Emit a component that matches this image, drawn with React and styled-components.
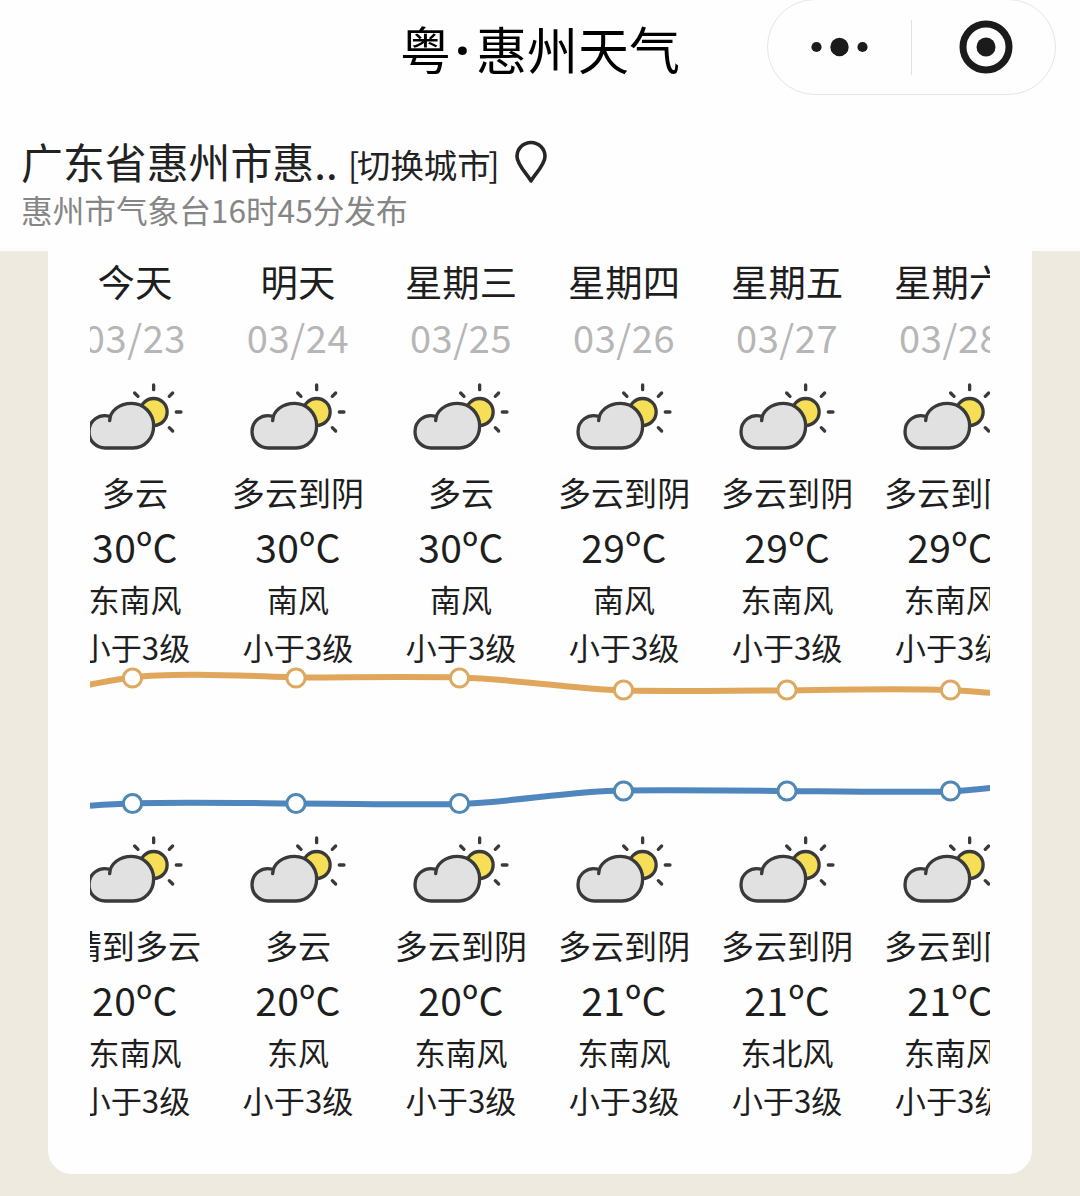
import React from "react";
import styled, { createGlobalStyle } from "styled-components";

const GlobalStyle = createGlobalStyle`
	* {
		box-sizing: border-box;
	}

	body {
		margin: 0;
		background: #eeeadf;
		color: #1e1e1e;
		font-family: "Noto Sans CJK SC", sans-serif;
	}
`;

const Page = styled.div`
	width: 1080px;
	height: 1196px;
	overflow: hidden;
`;

const Header = styled.header`
	height: 251px;
	background: #fefefe;
`;

const NavBar = styled.div`
	display: grid;
	grid-template-columns: 1fr auto 1fr;
	height: 96px;
	padding-right: 24px;
`;

const Title = styled.h1`
	grid-column: 2;
	display: flex;
	margin: 0 0 0 24px;
	font-size: 51px;
	font-weight: 400;
	line-height: 97px;
	color: #000;
`;

const TitleDot = styled.span`
	width: 25px;
	display: flex;
	justify-content: center;
	padding-right: 2px;
	font-family: "Noto Sans", sans-serif;
	font-weight: 700;
	line-height: 99px;
`;

const Capsule = styled.div`
	justify-self: end;
	display: flex;
	align-items: center;
	width: 289px;
	height: 96px;
	margin-top: -1px;
	border: 1px solid #e6e6e6;
	border-radius: 48px;
`;

const CapsuleButton = styled.button`
	flex: 0 0 ${(props) => (props.$divided ? 144 : 143)}px;
	display: flex;
	align-items: center;
	justify-content: center;
	height: 55px;
	padding: ${(props) => (props.$divided ? "0 0 0 4px" : "0")};
	border: 0;
	border-left: ${(props) => (props.$divided ? "1px solid #e2e2e2" : "0")};
	background: none;
`;

const Location = styled.div`
	display: flex;
	align-items: flex-start;
	height: 56px;
	margin-top: 36px;
	padding-left: 21px;
	color: #222;
	white-space: nowrap;
`;

const City = styled.div`
	width: 327px;
	font-size: 41.9px;
	line-height: 58px;
`;

const Switch = styled.div`
	display: flex;
	width: 151px;
	font-size: 33.4px;
	line-height: 64px;
`;

const Bracket = styled.span`
	width: 9px;
	display: flex;
	justify-content: ${(props) => (props.$end ? "flex-end" : "flex-start")};
`;

const PinIcon = styled.svg`
	margin: 8px 0 0 15px;
`;

const Published = styled.div`
	padding-left: 21px;
	font-size: 31.65px;
	line-height: 43px;
	color: #868686;
`;

const Card = styled.main`
	width: 984px;
	height: 923px;
	margin: 0 auto;
	padding: 0 42px;
	background: #fefefe;
	border-radius: 0 0 24px 24px;
`;

const Columns = styled.div`
	display: flex;
	overflow-x: clip;
	overflow-y: visible;
`;

const Column = styled.div`
	flex: 0 0 163.05px;
	display: flex;
	flex-direction: column;
	align-items: center;
	white-space: nowrap;

	&:first-child {
		margin-left: -36.6px;
	}
`;

const Line = styled.div`
	height: ${(props) => props.$height}px;
	padding-top: ${(props) => props.$top || 0}px;
	font-size: ${(props) => props.$size}px;
	line-height: ${(props) => props.$height}px;
	letter-spacing: ${(props) => props.$spacing || 0}px;
	color: ${(props) => props.$color || "inherit"};
`;

const IconBox = styled.div`
	height: 101px;
	padding-top: 17.7px;
`;

const Chart = styled.svg`
	display: block;
`;

const days = [
	{ name: "今天", date: "03/23", high: ["多云", 30, "东南风"], low: ["晴到多云", 20, "东南风"] },
	{ name: "明天", date: "03/24", high: ["多云到阴", 30, "南风"], low: ["多云", 20, "东风"] },
	{ name: "星期三", date: "03/25", high: ["多云", 30, "南风"], low: ["多云到阴", 20, "东南风"] },
	{ name: "星期四", date: "03/26", high: ["多云到阴", 29, "南风"], low: ["多云到阴", 21, "东南风"] },
	{ name: "星期五", date: "03/27", high: ["多云到阴", 29, "东南风"], low: ["多云到阴", 21, "东北风"] },
	{ name: "星期六", date: "03/28", high: ["多云到阴", 29, "东南风"], low: ["多云到阴", 21, "东南风"] },
];

const pointX = [42.5, 206, 369.5, 533.5, 697, 860.5];
const highY = [12, 12, 12, 24, 24, 24];
const lowY = [137.5, 137.5, 137.5, 125, 125, 125];

function CloudSun() {
	return (
		<svg width='99.3' height='69.3' viewBox='55 35 298 208' stroke='#3a3a3a' strokeWidth='10' strokeLinecap='round'>
			<path d='M261 44V58M204 68l10 10M318 68l-10 10M329 125h14M308 172l10 10' fill='none' />
			<circle cx='261' cy='125' r='40.5' fill='#f6df57' />
			<path
				d='M129 151C130 121 159 99 195 99C232 99 261 130 261 166C261 203 235 233 199 233H116C88 233 67 212 67 184C67 151 97 129 129 138Z'
				fill='#e1e1e2'
				stroke='none'
			/>
			<path
				d='M129 151C130 121 159 99 195 99C232 99 261 130 261 166C261 203 235 233 199 233H116C88 233 67 212 67 184C67 151 97 129 129 138'
				fill='none'
			/>
		</svg>
	);
}

function Forecast({ data }) {
	const [weather, temp, wind] = data;
	return (
		<>
			<IconBox>
				<CloudSun />
			</IconBox>
			<Line $height={54} $size={33.1}>{weather}</Line>
			<Line $height={53} $top={1} $size={39} $spacing={0.4}>{temp}ºC</Line>
			<Line $height={54} $size={31}>{wind}</Line>
			<Line $height={40} $top={1} $size={31.2}>小于3级</Line>
		</>
	);
}

function TrendChart() {
	return (
		<Chart width='900' height='151' viewBox='0 0 900 151' fill='none' strokeWidth='6'>
			<path
				d='M-5 19.5C12 16.5 25 13.5 42.5 11.5C75 7 130 8.5 206 11.5C260 11.5 315 10.5 369.5 11.5C425 13 480 23 533.5 24.5C590 25.5 640 24.5 697 24.5C750 23.5 806 22.5 860.5 24C875 24.7 890 26 905 27'
				stroke='#e0a65c'
			/>
			<path
				d='M-5 140C10 139 25 138 42.5 137.3C95 136 150 137 206 137.5C260 137.5 315 139 369.5 138C425 136 480 125 533.5 124.5C590 124 640 124.5 697 125C750 125.5 806 126.5 860.5 125.5C875 124.5 890 123 905 121.5'
				stroke='#4f86be'
			/>
			{pointX.map((x, i) => (
				<g key={x} fill='#fff' strokeWidth='3'>
					<circle cx={x} cy={highY[i]} r='9.1' stroke='#dba961' />
					<circle cx={x} cy={lowY[i]} r='9.1' stroke='#4f88b4' />
				</g>
			))}
		</Chart>
	);
}

function App() {
	return (
		<Page>
			<GlobalStyle />
			<Header>
				<NavBar>
					<Title>
						粤<TitleDot>·</TitleDot>惠州天气
					</Title>
					<Capsule>
						<CapsuleButton>
							<svg width='58' height='20' viewBox='0 0 58 20' fill='#1b1b1b'>
								<circle cx='5.5' cy='10' r='5.1' />
								<circle cx='28.5' cy='10' r='9.2' />
								<circle cx='51.5' cy='10' r='5.1' />
							</svg>
						</CapsuleButton>
						<CapsuleButton $divided>
							<svg width='54' height='54' viewBox='0 0 54 54' fill='#1b1b1b'>
								<circle cx='27' cy='27' r='23' fill='none' stroke='#1b1b1b' strokeWidth='7' />
								<circle cx='27' cy='27' r='9.5' />
							</svg>
						</CapsuleButton>
					</Capsule>
				</NavBar>
				<Location>
					<City>广东省惠州市惠..</City>
					<Switch>
						<Bracket>[</Bracket>切换城市<Bracket $end>]</Bracket>
					</Switch>
					<PinIcon width='34' height='44' viewBox='0 0 34 44' fill='none' stroke='#262626' strokeWidth='3.6'>
						<path d='M17 41C14 35 3 25 3 16.500A14 14 0 0 1 31 16.500C31 25 20 35 17 41Z' strokeLinejoin='round' />
					</PinIcon>
				</Location>
				<Published>惠州市气象台16时45分发布</Published>
			</Header>
			<Card>
				<Columns>
					{days.map((day) => (
						<Column key={day.date}>
							<Line $height={58} $top={1} $size={37.4}>{day.name}</Line>
							<Line $height={55} $size={38} $spacing={0.6} $color='#b6b6b6'>{day.date}</Line>
							<Forecast data={day.high} />
						</Column>
					))}
				</Columns>
				<TrendChart />
				<Columns>
					{days.map((day) => (
						<Column key={day.date}>
							<Forecast data={day.low} />
						</Column>
					))}
				</Columns>
			</Card>
		</Page>
	);
}

export default App;
